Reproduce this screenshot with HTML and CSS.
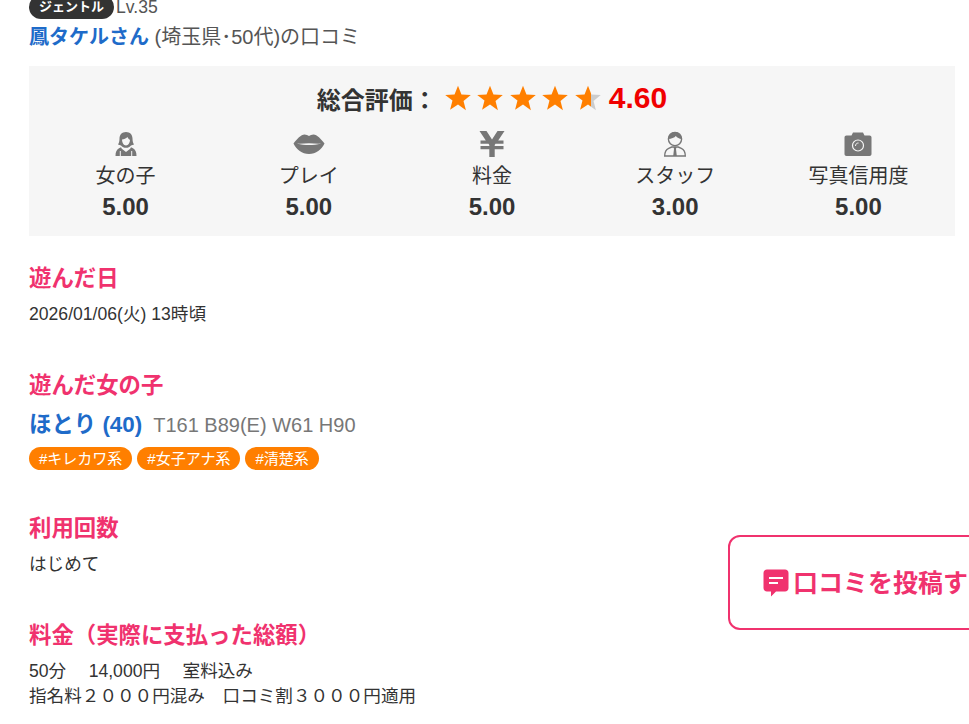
FILE: index.html
```html
<!DOCTYPE html>
<html lang="ja">
<head>
    <meta charset="UTF-8">
    <title>口コミ</title>
    <link rel="stylesheet" href="styles.css">
</head>
<body>
    <div class="container">
        <div class="rank-line">
            <span class="rank-badge">ジェントル</span>
            <span class="rank-level">Lv.35</span>
        </div>
        <div class="poster">
            <a class="poster-name">鳳タケルさん</a> (埼玉県･50代)の口コミ
        </div>

        <div class="score-box">
            <div class="score-total">
                <span class="score-label">総合評価：</span>
                <span class="stars">
                    <svg class="star" viewBox="0 0 24 24"><path fill="#ff7f00" d="M12 .6l3.2 8.2 8.6.5-6.7 5.5 2.2 8.5L12 18l-7.3 4.8 2.2-8.5L.2 9.3l8.6-.5z"/></svg>
                    <svg class="star" viewBox="0 0 24 24"><path fill="#ff7f00" d="M12 .6l3.2 8.2 8.6.5-6.7 5.5 2.2 8.5L12 18l-7.3 4.8 2.2-8.5L.2 9.3l8.6-.5z"/></svg>
                    <svg class="star" viewBox="0 0 24 24"><path fill="#ff7f00" d="M12 .6l3.2 8.2 8.6.5-6.7 5.5 2.2 8.5L12 18l-7.3 4.8 2.2-8.5L.2 9.3l8.6-.5z"/></svg>
                    <svg class="star" viewBox="0 0 24 24"><path fill="#ff7f00" d="M12 .6l3.2 8.2 8.6.5-6.7 5.5 2.2 8.5L12 18l-7.3 4.8 2.2-8.5L.2 9.3l8.6-.5z"/></svg>
                    <svg class="star" viewBox="0 0 24 24">
                        <defs>
                            <linearGradient id="part-star">
                                <stop offset="60%" stop-color="#ff7f00"/>
                                <stop offset="60%" stop-color="#cccccc"/>
                            </linearGradient>
                        </defs>
                        <path fill="url(#part-star)" d="M12 .6l3.2 8.2 8.6.5-6.7 5.5 2.2 8.5L12 18l-7.3 4.8 2.2-8.5L.2 9.3l8.6-.5z"/>
                    </svg>
                </span>
                <span class="score-value">4.60</span>
            </div>
            <div class="score-items">
                <div class="score-item">
                    <svg class="score-icon" viewBox="0 0 26 26">
                        <path fill="#777" d="M13 1c-4 0-6.500 2.800-6.500 6.500 0 2.500-.5 4.500-1.500 6l3 1c1.200 1.400 3 2.300 5 2.300s3.800-.9 5-2.300l3-1c-1-1.500-1.500-3.500-1.500-6C19.500 3.800 17 1 13 1z"/>
                        <path fill="#f6f6f6" d="M9 8.500c2 0 4-1 5.500-2.500.5 1.500 1.500 2.500 2.500 2.800 0 3-1.800 5.700-4 5.700s-4-3-4-6z"/>
                        <path fill="#777" d="M2.500 25c0-4 1-6.500 3.500-7.800l2-1 .8 1.500L13 21l4.200-3.300.8-1.500 2 1c2.500 1.300 3.500 3.800 3.500 7.800z"/>
                        <path fill="#f6f6f6" d="M6.800 25v-5h1v5zM18.200 25v-5h1v5z"/>
                    </svg>
                    <div class="score-name">女の子</div>
                    <div class="score-num">5.00</div>
                </div>
                <div class="score-item">
                    <svg class="score-icon" viewBox="0 0 32 26">
                        <path fill="#777" d="M.5 12.500C4 8 8 3.500 11.500 3.500c1.800 0 3.300.9 4.500 1.600 1.200-.7 2.700-1.600 4.500-1.600 3.500 0 7.500 4.500 11 9-3 6-8.500 10.500-15.500 10.500S3.500 18.500.5 12.500z"/>
                        <path fill="#f6f6f6" d="M4 12.600c4 .4 8-.4 12-.4s8 .8 12 .4c-4 1.100-8 1.500-12 1.500s-8-.4-12-1.500z"/>
                    </svg>
                    <div class="score-name">プレイ</div>
                    <div class="score-num">5.00</div>
                </div>
                <div class="score-item">
                    <svg class="score-icon" viewBox="0 0 26 26">
                        <path fill="#777" d="M.5 0h7L13 8.500 18.500 0h7l-6.300 9.500h5.300v3.300h-8l-.8 1.300v.9h8.800v3.300h-8.800V26h-5.400v-7.700H1.500V15h8.800v-.9l-.8-1.300h-8V9.500h5.300z"/>
                    </svg>
                    <div class="score-name">料金</div>
                    <div class="score-num">5.00</div>
                </div>
                <div class="score-item">
                    <svg class="score-icon" viewBox="0 0 26 26">
                        <circle cx="13" cy="8" r="6.600" fill="#f6f6f6" stroke="#777" stroke-width="1.400"/>
                        <path fill="#777" d="M6.400 8C6.400 3.800 9.300 1 13 1s6.600 2.800 6.600 7c-2.200-.2-4.400-1.200-5.800-3-1.400 1.800-4.400 2.800-7.400 3z"/>
                        <path fill="none" stroke="#777" stroke-width="1.400" d="M2.700 25c0-4 1.300-6.500 4-7.700l3-1.300h6.600l3 1.300c2.700 1.200 4 3.700 4 7.700z"/>
                        <path fill="#777" d="M11.500 16h3l-.5 2 .8 7h-3.600l.8-7z"/>
                    </svg>
                    <div class="score-name">スタッフ</div>
                    <div class="score-num">3.00</div>
                </div>
                <div class="score-item">
                    <svg class="score-icon" viewBox="0 0 28 26">
                        <path fill="#777" d="M9 1.500h10l1.500 3h5c1.200 0 2 .8 2 2V23c0 1.200-.8 2-2 2h-23c-1.200 0-2-.8-2-2V6.500c0-1.200.8-2 2-2h5z"/>
                        <circle cx="14" cy="14.500" r="5.500" fill="none" stroke="#f6f6f6" stroke-width="1.200"/>
                        <path fill="none" stroke="#f6f6f6" stroke-width="1" d="M11.500 15c0-1.800 1.200-3 3-3"/>
                    </svg>
                    <div class="score-name">写真信用度</div>
                    <div class="score-num">5.00</div>
                </div>
            </div>
        </div>

        <section class="block block-date">
            <h3>遊んだ日</h3>
            <p>2026/01/06(火) 13時頃</p>
        </section>

        <section class="block">
            <h3>遊んだ女の子</h3>
            <div class="girl-line">
                <a class="girl-name">ほとり (40)</a>
                <span class="girl-size">T161 B89(E) W61 H90</span>
            </div>
            <div class="tags">
                <span class="tag">#キレカワ系</span>
                <span class="tag">#女子アナ系</span>
                <span class="tag">#清楚系</span>
            </div>
        </section>

        <section class="block">
            <h3>利用回数</h3>
            <p>はじめて</p>
        </section>

        <section class="block">
            <h3>料金（実際に支払った総額）</h3>
            <p>50分　 14,000円　 室料込み<br>指名料２０００円混み　口コミ割３０００円適用</p>
        </section>
    </div>

    <a class="post-button">
        <svg class="post-icon" viewBox="0 0 26 28">
            <path fill="#f0326e" d="M4 .5h18c2 0 3.500 1.500 3.500 3.500v15c0 2-1.500 3.500-3.500 3.500h-9L8 27.500v-5H4C2 22.500.5 21 .5 19V4C.5 2 2 .5 4 .5z"/>
            <path fill="#fff" d="M6 8h14v2H6zM6 13h9v2H6z"/>
        </svg>
        <span class="post-label">口コミを投稿する</span>
    </a>
</body>
</html>
```

FILE: styles.css
```css
html, body {
    margin: 0;
    padding: 0;
    height: 724px;
    overflow: hidden;
    background-color: white;
}

body {
    font-family: "Liberation Sans", "Noto Sans CJK JP", sans-serif;
    color: #333;
    font-size: 16px;
}

.container {
    width: 926px;
    margin-left: 29px;
    margin-top: -5px;
}

.rank-line {
    display: flex;
    align-items: center;
    gap: 2px;
    height: 24px;
}

.rank-badge {
    background-color: #333;
    color: white;
    font-size: 13px;
    font-weight: bold;
    line-height: 24px;
    padding: 0 10px;
    border-radius: 12px;
}

.rank-level {
    font-size: 17.6px;
    color: #555;
}

.poster {
    font-size: 20px;
    line-height: 24px;
    margin-top: 6px;
    color: #555;
}

.poster-name {
    font-size: 20px;
    font-weight: bold;
    color: #1e6bc9;
}

.score-box {
    background-color: #f6f6f6;
    margin-top: 17px;
    padding: 14px 5px 13px;
    height: 143px;
}

.score-total {
    display: flex;
    justify-content: center;
    align-items: center;
    height: 36px;
}

.score-label {
    font-size: 24px;
    font-weight: bold;
}

.stars {
    display: flex;
    gap: 6.5px;
    margin-left: 8px;
    margin-right: 8px;
}

.star {
    width: 26px;
    height: 26px;
}

.score-value {
    font-size: 30px;
    font-weight: bold;
    color: #f00000;
}

.score-items {
    display: grid;
    grid-template-columns: repeat(5, 1fr);
    margin-top: 15px;
}

.score-item {
    text-align: center;
}

.score-icon {
    display: block;
    height: 26px;
    margin: 0 auto;
}

.score-name {
    font-size: 20px;
    line-height: 26px;
    margin-top: 6px;
}

.score-num {
    font-size: 24px;
    font-weight: bold;
    line-height: 30px;
    margin-top: 3px;
}

.block {
    margin-top: 44px;
}

.block-date {
    margin-top: 28px;
}

.block h3 {
    margin: 0;
    font-size: 22.4px;
    line-height: 30px;
    font-weight: bold;
    color: #f0326e;
}

.block p {
    margin: 8px 0 0;
    font-size: 17.6px;
    line-height: 25px;
}

.girl-line {
    display: flex;
    align-items: baseline;
    gap: 11px;
    margin-top: 5px;
}

.girl-name {
    font-size: 22.4px;
    font-weight: bold;
    color: #1e6bc9;
}

.girl-size {
    font-size: 20px;
    color: #777;
}

.tags {
    display: flex;
    gap: 5px;
    margin-top: 9px;
}

.tag {
    background-color: #ff7f00;
    color: white;
    font-size: 15px;
    line-height: 23px;
    padding: 0 10px;
    border-radius: 12px;
}

.post-button {
    position: fixed;
    left: 728px;
    top: 535px;
    width: 300px;
    height: 91px;
    display: flex;
    align-items: center;
    gap: 4px;
    padding-left: 33px;
    background-color: white;
    border: 2px solid #f0326e;
    border-radius: 12px;
    color: #f0326e;
    font-size: 25px;
    font-weight: bold;
}

.post-icon {
    width: 26px;
    height: 28px;
}

.post-label {
    margin-bottom: 4px;
}
```
